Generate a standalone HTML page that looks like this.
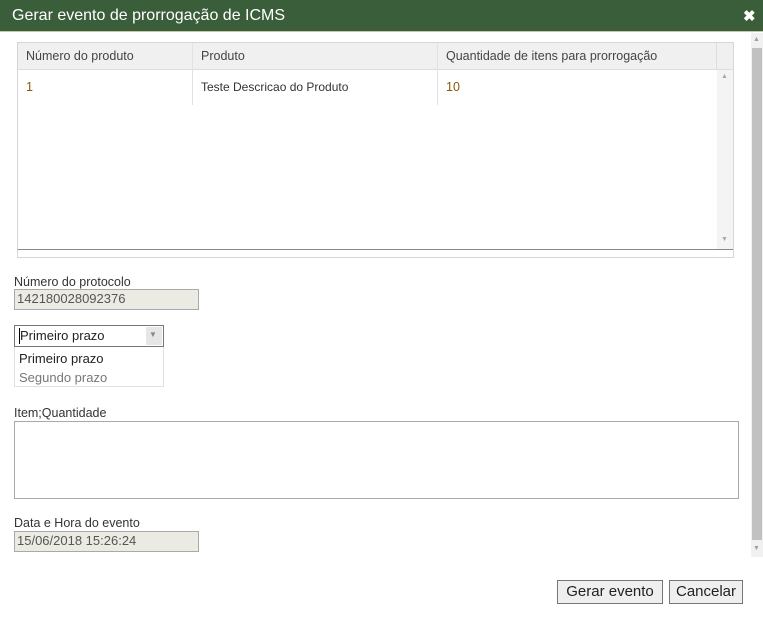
<!DOCTYPE html><html><head><style>
body{margin:0;width:763px;height:618px;background:#fff;font-family:"Liberation Sans",sans-serif;position:relative;overflow:hidden;font-size:13px;color:#333}
div,span{position:absolute;box-sizing:border-box}
.t{font-size:12.5px;white-space:nowrap}
.lbl{color:#333;font-size:12.5px}
.inp{background:#ebebe4;border:1px solid #a9a9a9;color:#555;font-size:13px;padding:1px 2px}
.btn{background:#efefef;border:1px solid #767676;font-size:15px;color:#222;text-align:center;line-height:21px}
</style></head><body>
<div style="left:0;top:0;width:763px;height:32px;background:#3a5e3a;border-bottom:1px solid #c8c8a8"></div>
<div class="t" style="left:12px;top:7px;color:#fff;font-size:16px">Gerar evento de prorrogação de ICMS</div>
<div style="left:743px;top:7px;color:#fff;font-size:15px;font-weight:bold">✖</div>
<!-- outer scrollbar -->
<div style="left:751px;top:33px;width:12px;height:524px;background:#f1f1f1"></div>
<div style="left:752px;top:48px;width:10px;height:492px;background:#c1c1c1"></div>
<div style="left:753px;top:36px;font-size:7px;color:#a0a0a0">▲</div>
<div style="left:753px;top:545px;font-size:7px;color:#a0a0a0">▼</div>
<!-- table -->
<div style="left:17px;top:42px;width:717px;height:216px;border:1px solid #d6d6d6"></div>
<div style="left:18px;top:43px;width:715px;height:27px;background:#f0f0f0;border-bottom:1px solid #ddd"></div>
<div style="left:192px;top:43px;width:1px;height:62px;background:#e2e2e2"></div>
<div style="left:437px;top:43px;width:1px;height:62px;background:#e2e2e2"></div>
<div style="left:716px;top:43px;width:1px;height:27px;background:#ddd"></div>
<div class="t" style="left:26px;top:49px;color:#444">Número do produto</div>
<div class="t" style="left:201px;top:49px;color:#444">Produto</div>
<div class="t" style="left:446px;top:49px;color:#444">Quantidade de itens para prorrogação</div>
<div class="t" style="left:26px;top:80px;color:#8a5a00">1</div>
<div class="t" style="left:201px;top:80px;color:#333;font-size:12px">Teste Descricao do Produto</div>
<div class="t" style="left:446px;top:80px;color:#8a5a00">10</div>
<div style="left:717px;top:70px;width:16px;height:180px;background:#f4f4f4"></div>
<div style="left:721px;top:73px;font-size:7px;color:#aaa">▲</div>
<div style="left:721px;top:236px;font-size:7px;color:#aaa">▼</div>
<div style="left:18px;top:249px;width:715px;height:1px;background:#888"></div>
<!-- fields -->
<div class="lbl t" style="left:14px;top:275px">Número do protocolo</div>
<div class="inp" style="left:14px;top:289px;width:185px;height:21px">142180028092376</div>
<div style="left:14px;top:325px;width:150px;height:22px;border:1px solid #767676;background:#fff"></div>
<div style="left:19px;top:328px;width:1px;height:16px;background:#000"></div>
<div class="t" style="left:20px;top:328px;font-size:13px;color:#222">Primeiro prazo</div>
<div style="left:146px;top:327px;width:16px;height:18px;background:#e6e6e6"></div>
<div style="left:149px;top:330px;font-size:8px;color:#888">▼</div>
<div style="left:14px;top:347px;width:150px;height:40px;border:1px solid #e0e0e0;border-top:none;background:#fff"></div>
<div class="t" style="left:19px;top:351px;font-size:13px;color:#222">Primeiro prazo</div>
<div class="t" style="left:19px;top:370px;font-size:13px;color:#777">Segundo prazo</div>
<div class="lbl t" style="left:14px;top:406px">Item;Quantidade</div>
<div style="left:14px;top:421px;width:725px;height:78px;border:1px solid #a9a9a9"></div>
<div class="lbl t" style="left:14px;top:516px">Data e Hora do evento</div>
<div class="inp" style="left:14px;top:531px;width:185px;height:21px">15/06/2018 15:26:24</div>
<div class="btn" style="left:557px;top:580px;width:106px;height:24px">Gerar evento</div>
<div class="btn" style="left:669px;top:580px;width:74px;height:24px">Cancelar</div>
</body></html>
